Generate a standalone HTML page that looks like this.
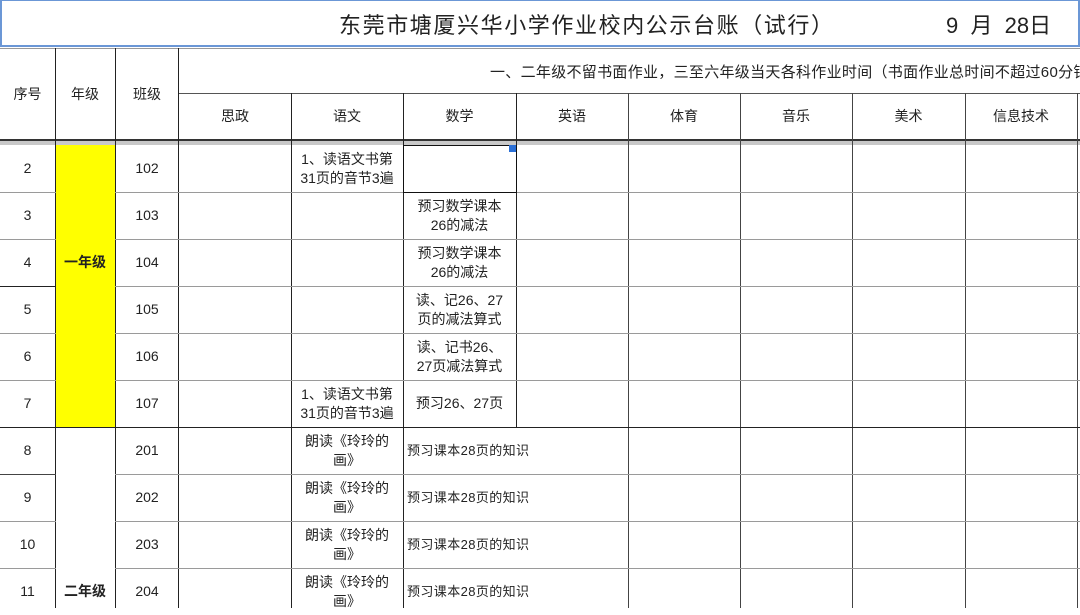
<!DOCTYPE html>
<html><head><meta charset="utf-8"><style>
*{margin:0;padding:0;box-sizing:border-box}
body{width:1080px;height:608px;overflow:hidden;background:#fff;position:relative;font-family:"Liberation Sans","Noto Sans CJK SC",sans-serif;color:#222}
.a{position:absolute}
.v{position:absolute;width:1px;background:#222}
.h{position:absolute;height:1px;background:#9a9a9a}
.t{position:absolute;display:flex;align-items:center;justify-content:center;text-align:center;font-size:14px;line-height:19px}
.s{font-size:13px;letter-spacing:0.4px;justify-content:flex-start;padding-left:4px;white-space:nowrap}
</style></head><body>
<div class="a" style="left:0;top:0;width:1080px;height:47px;border:2px solid #6b97d6;border-top:1px solid #6b97d6"></div>
<div class="a" style="left:339px;top:8px;font-size:22px;letter-spacing:1.6px;white-space:nowrap">东莞市塘厦兴华小学作业校内公示台账（试行）</div>
<div class="a" style="left:946px;top:8px;font-size:22px;white-space:nowrap">9&nbsp; 月&nbsp; 28日</div>
<div class="a" style="left:490px;top:61px;font-size:15px;letter-spacing:0.3px;white-space:nowrap">一、二年级不留书面作业，三至六年级当天各科作业时间（书面作业总时间不超过60分钟</div>
<div class="a" style="left:0;top:48px;width:1080px;height:1px;background:#999"></div>
<div class="h" style="left:179px;top:93px;width:901px;background:#555"></div>
<div class="a" style="left:0;top:139px;width:1080px;height:2px;background:#333"></div>
<div class="a" style="left:0;top:141px;width:1080px;height:4px;background:#c8c8c8"></div>
<div class="v" style="left:55px;top:48px;height:560px"></div>
<div class="v" style="left:115px;top:48px;height:560px"></div>
<div class="v" style="left:178px;top:48px;height:560px"></div>
<div class="v" style="left:291px;top:93px;height:515px"></div>
<div class="v" style="left:403px;top:93px;height:515px"></div>
<div class="v" style="left:516px;top:93px;height:334px"></div>
<div class="v" style="left:628px;top:93px;height:515px;background:#444"></div>
<div class="v" style="left:740px;top:93px;height:515px;background:#444"></div>
<div class="v" style="left:852px;top:93px;height:515px;background:#444"></div>
<div class="v" style="left:965px;top:93px;height:515px;background:#444"></div>
<div class="v" style="left:1077px;top:93px;height:515px;background:#444"></div>
<div class="t" style="left:0;top:48px;width:55px;height:92px">序号</div>
<div class="t" style="left:55px;top:48px;width:60px;height:92px">年级</div>
<div class="t" style="left:115px;top:48px;width:64px;height:92px">班级</div>
<div class="t" style="left:179px;top:93px;width:112px;height:47px">思政</div>
<div class="t" style="left:291px;top:93px;width:112px;height:47px">语文</div>
<div class="t" style="left:403px;top:93px;width:113px;height:47px">数学</div>
<div class="t" style="left:516px;top:93px;width:112px;height:47px">英语</div>
<div class="t" style="left:628px;top:93px;width:112px;height:47px">体育</div>
<div class="t" style="left:740px;top:93px;width:112px;height:47px">音乐</div>
<div class="t" style="left:852px;top:93px;width:113px;height:47px">美术</div>
<div class="t" style="left:965px;top:93px;width:112px;height:47px">信息技术</div>
<div class="a" style="left:56px;top:145px;width:59px;height:282px;background:#ffff00"></div>
<div class="h" style="left:0;top:192px;width:56px"></div><div class="h" style="left:115px;top:192px;width:965px"></div>
<div class="h" style="left:0;top:239px;width:56px"></div><div class="h" style="left:115px;top:239px;width:965px"></div>
<div class="h" style="left:0;top:286px;width:56px;background:#222"></div><div class="h" style="left:115px;top:286px;width:965px"></div>
<div class="h" style="left:0;top:333px;width:56px"></div><div class="h" style="left:115px;top:333px;width:965px"></div>
<div class="h" style="left:0;top:380px;width:56px"></div><div class="h" style="left:115px;top:380px;width:965px"></div>
<div class="h" style="left:0;top:427px;width:1080px;background:#222"></div>
<div class="h" style="left:0;top:474px;width:56px;background:#444"></div><div class="h" style="left:115px;top:474px;width:965px"></div>
<div class="h" style="left:0;top:521px;width:56px"></div><div class="h" style="left:115px;top:521px;width:965px"></div>
<div class="h" style="left:0;top:568px;width:56px"></div><div class="h" style="left:115px;top:568px;width:965px"></div>
<div class="a" style="left:403px;top:145px;width:114px;height:48px;border:1px solid #111"></div>
<div class="a" style="left:509px;top:145px;width:7px;height:7px;background:#2a6fd6"></div>
<div class="t" style="left:0;top:145px;width:55px;height:47px">2</div><div class="t" style="left:115px;top:145px;width:64px;height:47px">102</div>
<div class="t" style="left:291px;top:145px;width:112px;height:47px">1、读语文书第<br>31页的音节3遍</div>
<div class="t" style="left:0;top:192px;width:55px;height:47px">3</div><div class="t" style="left:115px;top:192px;width:64px;height:47px">103</div>
<div class="t" style="left:403px;top:192px;width:113px;height:47px">预习数学课本<br>26的减法</div>
<div class="t" style="left:0;top:239px;width:55px;height:47px">4</div><div class="t" style="left:115px;top:239px;width:64px;height:47px">104</div>
<div class="t" style="left:55px;top:239px;width:60px;height:47px;font-weight:bold">一年级</div>
<div class="t" style="left:403px;top:239px;width:113px;height:47px">预习数学课本<br>26的减法</div>
<div class="t" style="left:0;top:286px;width:55px;height:47px">5</div><div class="t" style="left:115px;top:286px;width:64px;height:47px">105</div>
<div class="t" style="left:403px;top:286px;width:113px;height:47px">读、记26、27<br>页的减法算式</div>
<div class="t" style="left:0;top:333px;width:55px;height:47px">6</div><div class="t" style="left:115px;top:333px;width:64px;height:47px">106</div>
<div class="t" style="left:403px;top:333px;width:113px;height:47px">读、记书26、<br>27页减法算式</div>
<div class="t" style="left:0;top:380px;width:55px;height:47px">7</div><div class="t" style="left:115px;top:380px;width:64px;height:47px">107</div>
<div class="t" style="left:291px;top:380px;width:112px;height:47px">1、读语文书第<br>31页的音节3遍</div>
<div class="t" style="left:403px;top:380px;width:113px;height:47px">预习26、27页</div>
<div class="t" style="left:0;top:427px;width:55px;height:47px">8</div><div class="t" style="left:115px;top:427px;width:64px;height:47px">201</div>
<div class="t" style="left:291px;top:427px;width:112px;height:47px">朗读《玲玲的<br>画》</div>
<div class="t s" style="left:403px;top:427px;width:200px;height:47px">预习课本28页的知识</div>
<div class="t" style="left:0;top:474px;width:55px;height:47px">9</div><div class="t" style="left:115px;top:474px;width:64px;height:47px">202</div>
<div class="t" style="left:291px;top:474px;width:112px;height:47px">朗读《玲玲的<br>画》</div>
<div class="t s" style="left:403px;top:474px;width:200px;height:47px">预习课本28页的知识</div>
<div class="t" style="left:0;top:521px;width:55px;height:47px">10</div><div class="t" style="left:115px;top:521px;width:64px;height:47px">203</div>
<div class="t" style="left:291px;top:521px;width:112px;height:47px">朗读《玲玲的<br>画》</div>
<div class="t s" style="left:403px;top:521px;width:200px;height:47px">预习课本28页的知识</div>
<div class="t" style="left:0;top:568px;width:55px;height:47px">11</div><div class="t" style="left:115px;top:568px;width:64px;height:47px">204</div>
<div class="t" style="left:55px;top:568px;width:60px;height:47px;font-weight:bold">二年级</div>
<div class="t" style="left:291px;top:568px;width:112px;height:47px">朗读《玲玲的<br>画》</div>
<div class="t s" style="left:403px;top:568px;width:200px;height:47px">预习课本28页的知识</div>
</body></html>
